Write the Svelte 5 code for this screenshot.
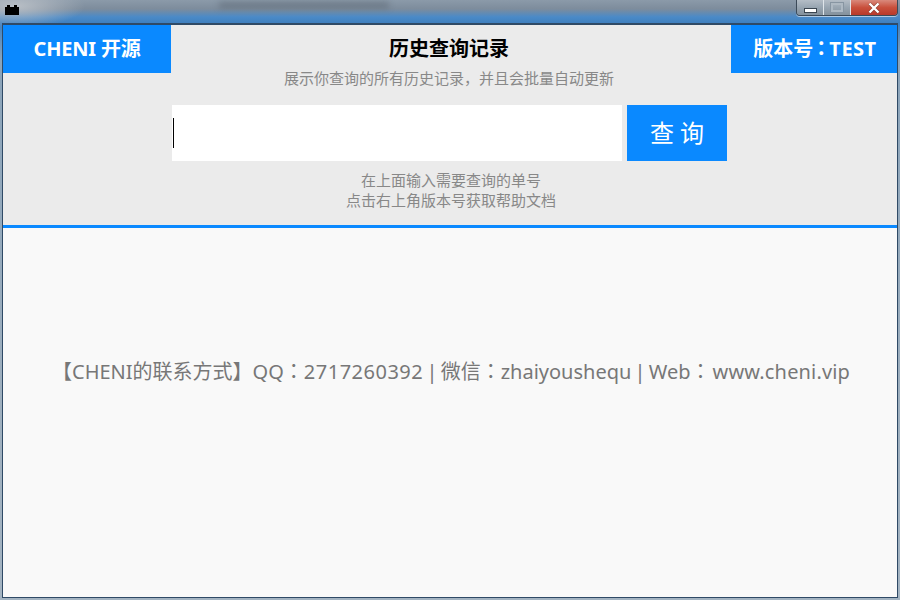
<script>
  let query = $state('');
</script>

<div class="window">
  <div class="titlebar">
    <svg class="appicon" width="14" height="11" viewBox="0 0 14 11">
      <path d="M0 3h14v8H0z" fill="#000" />
      <path d="M2 1h3v2H2zM9 1h3v2H9z" fill="#000" />
    </svg>
    <div class="ghost"></div>
    <div class="controls">
      <div class="ctl min"><span></span></div>
      <div class="ctl max"><span></span></div>
      <div class="ctl close">
        <svg width="14" height="12" viewBox="0 0 14 12">
          <path d="M2.5 1.5l9 9M11.5 1.5l-9 9" stroke="#4d2a24" stroke-width="3.6" fill="none" opacity="0.45" />
          <path d="M2.5 1.5l9 9M11.5 1.5l-9 9" stroke="#fff" stroke-width="2.4" fill="none" />
        </svg>
      </div>
    </div>
  </div>

  <div class="client">
    <header class="top">
      <div class="row">
        <div class="tab left">CHENI 开源</div>
        <div class="titles">
          <h1>历史查询记录</h1>
          <p>展示你查询的所有历史记录，并且会批量自动更新</p>
        </div>
        <div class="tab right">版本号<span class="colon narrow">：</span><span class="test">TEST</span></div>
      </div>
      <div class="search">
        <div class="field">
          <span class="caret"></span>
          <input bind:value={query} />
        </div>
        <button>查 询</button>
      </div>
      <div class="notes">
        <div>在上面输入需要查询的单号</div>
        <div>点击右上角版本号获取帮助文档</div>
      </div>
    </header>
    <main class="body">
      <p>【CHENI的联系方式】QQ<span class="colon">：</span><span class="digits">2717260392</span> | 微信<span class="colon">：</span>zhaiyoushequ | Web<span class="colon wide">：</span><span class="site">www.cheni.vip</span></p>
    </main>
  </div>
</div>

<style>
  :global(body) { margin: 0; }
  .window {
    width: 900px;
    height: 600px;
    display: flex;
    flex-direction: column;
    overflow: hidden;
    box-sizing: border-box;
    padding: 0 2px 2px;
    background:
      radial-gradient(ellipse 70px 22px at 15px 6px, #b9bfc6 0, rgba(185, 191, 198, 0) 100%),
      linear-gradient(180deg, #8b9aa9 0, #7d8c9c 9px, #4a8ac8 17px, #3f80bf 23px, #8ba4ba 60px, #9fb0bf 400px, #a4b4c2 100%);
    font-family: "Noto Sans", "Noto Sans CJK SC", sans-serif;
  }
  .titlebar {
    height: 23px;
    flex: none;
    display: flex;
    align-items: flex-start;
    padding-left: 3px;
  }
  .appicon { margin-top: 4px; flex: none; }
  .ghost {
    width: 170px;
    height: 6px;
    margin: 2px 0 0 200px;
    background: rgba(55, 65, 75, 0.32);
    filter: blur(3px);
  }
  .controls {
    display: flex;
    height: 15px;
    margin-left: auto;
    border: 1px solid #3c4a58;
    border-top: none;
    border-radius: 0 0 4px 4px;
    overflow: hidden;
    box-shadow: 0 1px 0 rgba(255, 255, 255, 0.55);
  }
  .ctl {
    display: flex;
    align-items: center;
    justify-content: center;
    box-sizing: border-box;
    height: 100%;
    background: linear-gradient(180deg, #b4bdc6, #98a5b1 50%, #84919c);
    border-right: 1px solid #dfe5ea;
  }
  .min { width: 27px; }
  .min span { width: 13px; height: 5px; margin-top: 5px; background: #fff; border: 1px solid #3a4550; box-sizing: border-box; }
  .max { width: 27px; }
  .max span { width: 12px; height: 9px; box-sizing: border-box; border: 2px solid #aeb9c3; outline: 1px solid #8795a2; }
  .close {
    width: 46px;
    border-right: none;
    background: linear-gradient(180deg, #d9897c, #c9503c 50%, #b8392a);
  }
  .client {
    flex: 1;
    min-height: 0;
    display: flex;
    flex-direction: column;
    border: 1px solid #2f4a66;
    border-top-width: 2px;
    background: #f9f9f9;
  }
  .top {
    box-sizing: border-box;
    background: #ebebeb;
    border-bottom: 3px solid #0a89ff;
    height: 203px;
    flex: none;
  }
  .row {
    display: grid;
    grid-template-columns: 168px 1fr 166px;
    height: 73px;
  }
  .tab {
    height: 48px;
    background: #0a89ff;
    color: #fff;
    font-weight: 700;
    font-size: 20px;
    line-height: 48px;
    text-align: center;
  }
  .left { letter-spacing: -0.2px; }
  .right { padding-left: 2px; box-sizing: border-box; }
  .colon { font-family: "Noto Sans CJK TC", sans-serif; line-height: 1; }
  .narrow { margin: 0 -2px; }
  .wide { margin-right: 2px; }
  .test { letter-spacing: 0.5px; }
  .titles { text-align: center; padding-right: 4px; }
  h1 {
    margin: 0;
    padding-top: 10px;
    font-size: 20px;
    line-height: 27px;
    color: #000;
    font-weight: 700;
  }
  .titles p {
    margin: 6px 0 0;
    font-size: 15px;
    line-height: 20px;
    color: #888;
  }
  .search {
    display: flex;
    justify-content: center;
    gap: 5px;
    margin-top: 7px;
    padding-right: 1px;
  }
  .field {
    position: relative;
    width: 450px;
    height: 56px;
    background: #fff;
  }
  .field input {
    width: 100%;
    height: 100%;
    box-sizing: border-box;
    border: none;
    outline: none;
    background: transparent;
    font-size: 24px;
    padding: 0 2px;
  }
  .caret {
    position: absolute;
    left: 1px;
    top: 13px;
    width: 1px;
    height: 30px;
    background: #000;
  }
  button {
    width: 100px;
    height: 56px;
    border: none;
    padding: 0 0 3px;
    background: #0a89ff;
    color: #fff;
    font-family: inherit;
    font-size: 24px;
  }
  .notes {
    margin-top: 9px;
    padding-left: 2px;
    text-align: center;
    font-size: 15px;
    line-height: 20px;
    color: #888;
  }
  .body {
    flex: 1;
    min-height: 0;
    display: flex;
    align-items: center;
    justify-content: center;
    padding-left: 2px;
  }
  .body p {
    margin: 0 0 84px;
    font-size: 20px;
    color: #777;
    white-space: nowrap;
    word-spacing: -2px;
  }
  .digits { letter-spacing: 0.5px; }
  .site { letter-spacing: 0.15px; }
</style>
